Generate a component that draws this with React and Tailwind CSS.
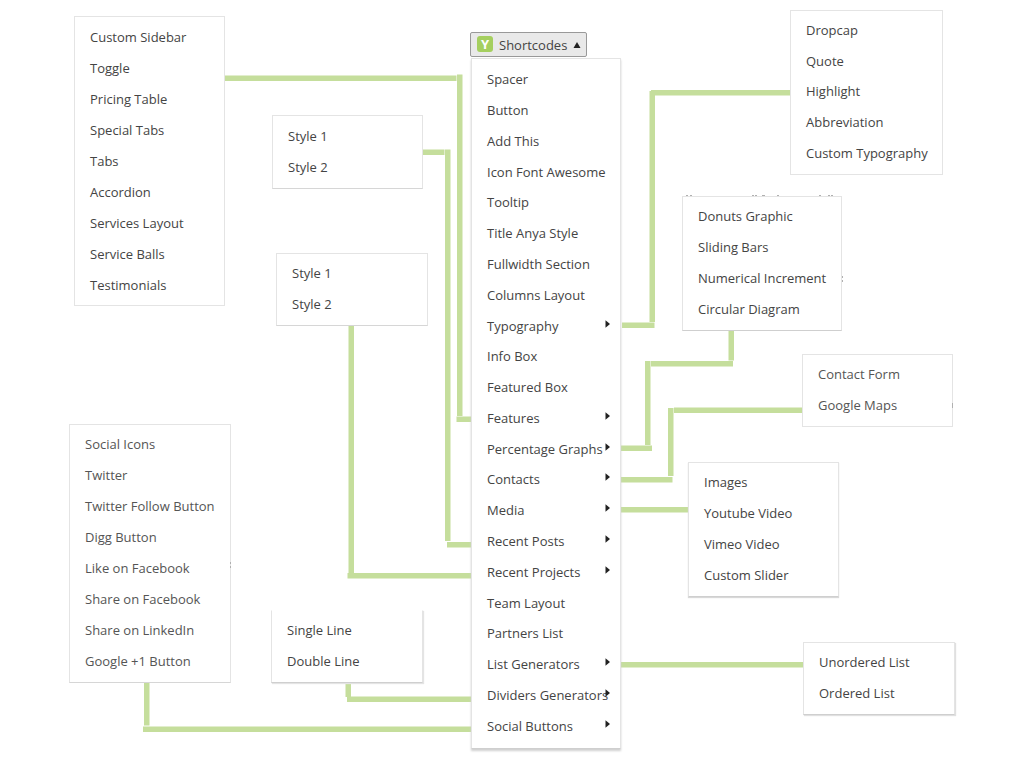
const PANELS = [
  {
    name: "Features",
    box: "left-[74px] top-[16px] w-[151px] h-[290px]",
    pad: "pt-[5px] pb-[5px]",
    items: [
      "Custom Sidebar",
      "Toggle",
      "Pricing Table",
      "Special Tabs",
      "Tabs",
      "Accordion",
      "Services Layout",
      "Service Balls",
      "Testimonials",
    ],
  },
  {
    name: "Recent Posts",
    box: "left-[272px] top-[115px] w-[151px] h-[74px] border-b-[#d6d6d6]",
    items: ["Style 1", "Style 2"],
  },
  {
    name: "Recent Projects",
    box: "left-[276px] top-[253px] w-[152px] h-[73px] border-b-[#d6d6d6]",
    items: ["Style 1", "Style 2"],
  },
  {
    name: "Social Buttons",
    box: "left-[69px] top-[424px] w-[162px] h-[259px] border-b-[#d6d6d6] text-[#555]",
    items: [
      "Social Icons",
      "Twitter",
      "Twitter Follow Button",
      "Digg Button",
      "Like on Facebook",
      "Share on Facebook",
      "Share on LinkedIn",
      "Google +1 Button",
    ],
  },
  {
    name: "Dividers Generators",
    box: "left-[271px] top-[610px] w-[152px] h-[73px] border-t-transparent border-b-[#cfcfcf] shadow-[1px_1px_1px_#e4e4e4]",
    items: ["Single Line", "Double Line"],
  },
  {
    name: "Typography",
    box: "left-[790px] top-[10px] w-[153px] h-[165px]",
    items: ["Dropcap", "Quote", "Highlight", "Abbreviation", "Custom Typography"],
  },
  {
    name: "Percentage Graphs",
    box: "left-[682px] top-[196px] w-[160px] h-[135px] border-b-[#cfcfcf]",
    items: ["Donuts Graphic", "Sliding Bars", "Numerical Increment", "Circular Diagram"],
  },
  {
    name: "Contacts",
    box: "left-[802px] top-[354px] w-[151px] h-[73px] text-[#555]",
    items: ["Contact Form", "Google Maps"],
  },
  {
    name: "Media",
    box: "left-[688px] top-[462px] w-[151px] h-[135px] border-b-[#cfcfcf] shadow-[0_1px_1px_#d8d8d8]",
    items: ["Images", "Youtube Video", "Vimeo Video", "Custom Slider"],
  },
  {
    name: "List Generators",
    box: "left-[803px] top-[642px] w-[152px] h-[73px] border-b-[#cfcfcf] shadow-[1px_1px_1px_#e0e0e0]",
    items: ["Unordered List", "Ordered List"],
  },
];

const MENU = [
  ["Spacer"],
  ["Button"],
  ["Add This"],
  ["Icon Font Awesome"],
  ["Tooltip"],
  ["Title Anya Style"],
  ["Fullwidth Section"],
  ["Columns Layout"],
  ["Typography", true],
  ["Info Box"],
  ["Featured Box"],
  ["Features", true],
  ["Percentage Graphs", true],
  ["Contacts", true],
  ["Media", true],
  ["Recent Posts", true],
  ["Recent Projects", true],
  ["Team Layout"],
  ["Partners List"],
  ["List Generators", true],
  ["Dividers Generators", true],
  ["Social Buttons", true],
];

// Connector segments: x, y, width, height
const SEGMENTS = [
  [225, 75.5, 231.5, 5.5],
  [457, 74.5, 5.5, 341.5],
  [456.5, 416.5, 14.5, 5.5],
  [423, 149.5, 21.5, 5.5],
  [445, 149.5, 5.5, 391.5],
  [447, 542, 24, 5.5],
  [348.5, 326, 5.5, 247],
  [347.5, 573, 123.5, 5.5],
  [345.5, 683, 5.5, 14],
  [347, 696.5, 124, 5.5],
  [144, 683, 5.5, 42.5],
  [143, 726.5, 328, 5.5],
  [622, 322.5, 32.5, 5.5],
  [649.5, 91, 5.5, 231],
  [651, 90, 139, 5.5],
  [620.5, 445.5, 31.5, 5.5],
  [645, 361, 5.5, 84],
  [651, 361, 82, 5.5],
  [728.5, 331, 5.5, 29.5],
  [620, 477, 52.5, 5.5],
  [668, 408, 5.5, 68],
  [674, 407.5, 128, 5.5],
  [620, 507, 68, 5.5],
  [620, 662, 183, 5.5],
];

// Small specks along panel edges: x, y, width, height
const SPECKS = [
  [686, 195, 2, 1],
  [690, 195, 2, 1],
  [752, 195, 2, 1],
  [755, 195, 2, 1],
  [762, 195, 3, 1],
  [777, 195, 2, 1],
  [819, 195, 2, 1],
  [828, 195, 2, 1],
  [831, 195, 2, 1],
  [842, 276, 1, 2],
  [842, 280, 1, 2],
  [230, 562, 1, 2],
  [230, 566, 1, 2],
  [952, 403, 1, 5],
];

function Item({ label, hasSub }) {
  return (
    <li className="flex min-w-0">
      <button
        type="button"
        aria-haspopup={hasSub ? "menu" : undefined}
        className="flex min-w-0 flex-1 cursor-pointer items-center pl-[15px] pr-[10px] text-left"
      >
        <span className="min-w-0 flex-1 whitespace-nowrap">{label}</span>
        {hasSub && (
          <svg className="mb-1 h-2 w-[5px] shrink-0" viewBox="0 0 5 8" aria-hidden="true">
            <path d="M0.5 0.3 L5 4 L0.5 7.7 Z" fill="#222" />
          </svg>
        )}
      </button>
    </li>
  );
}

function Panel({ name, box, pad = "pt-1 pb-1.5", children }) {
  return (
    <ul
      aria-label={name}
      className={`absolute grid auto-rows-fr grid-cols-1 border border-[#e4e4e4] bg-white ${pad} ${box}`}
    >
      {children}
    </ul>
  );
}

export default function App() {
  return (
    <main className="relative min-h-screen overflow-hidden bg-white font-['Open_Sans','Noto_Sans',sans-serif] text-[13px] leading-5 text-[#444]">
      <svg className="absolute left-0 top-0 h-[768px] w-[1020px]" viewBox="0 0 1020 768" aria-hidden="true">
        {SEGMENTS.map(([x, y, w, h]) => (
          <rect key={`${x}-${y}`} x={x} y={y} width={w} height={h} fill="#c5de9c" />
        ))}
      </svg>

      {PANELS.map((p) => (
        <Panel key={p.name} name={p.name} box={p.box} pad={p.pad}>
          {p.items.map((label) => (
            <Item key={label} label={label} />
          ))}
        </Panel>
      ))}

      <svg
        className="pointer-events-none absolute left-0 top-0 h-[768px] w-[1020px]"
        viewBox="0 0 1020 768"
        aria-hidden="true"
      >
        {SPECKS.map(([x, y, w, h]) => (
          <rect key={`${x}-${y}`} x={x} y={y} width={w} height={h} fill="#b0b0b0" />
        ))}
      </svg>

      <button
        type="button"
        aria-haspopup="menu"
        aria-expanded="true"
        className="absolute left-[470px] top-[32px] flex h-[25px] w-[117px] cursor-pointer items-center rounded-[2px] border border-[#999] bg-[#e9e9e9] pl-[6px]"
      >
        <span className="mb-[2px] flex size-4 items-center justify-center rounded-[3px] bg-[#a5cf5f] text-[13px] font-bold leading-4 text-white">
          Y
        </span>
        <span className="ml-[6px]">Shortcodes</span>
        <svg className="ml-[6px] h-[6px] w-2" viewBox="0 0 8 6" aria-hidden="true">
          <path d="M4 0 L7.5 6 H0.5 Z" fill="#222" />
        </svg>
      </button>

      <Panel
        name="Shortcodes"
        pad="pt-[5px] pb-[7px]"
        box="left-[471px] top-[58px] w-[150px] h-[691px] border-b-[#cfcfcf] shadow-[0_2px_2px_#d0d0d0]"
      >
        {MENU.map(([label, hasSub]) => (
          <Item key={label} label={label} hasSub={hasSub} />
        ))}
      </Panel>
    </main>
  );
}
